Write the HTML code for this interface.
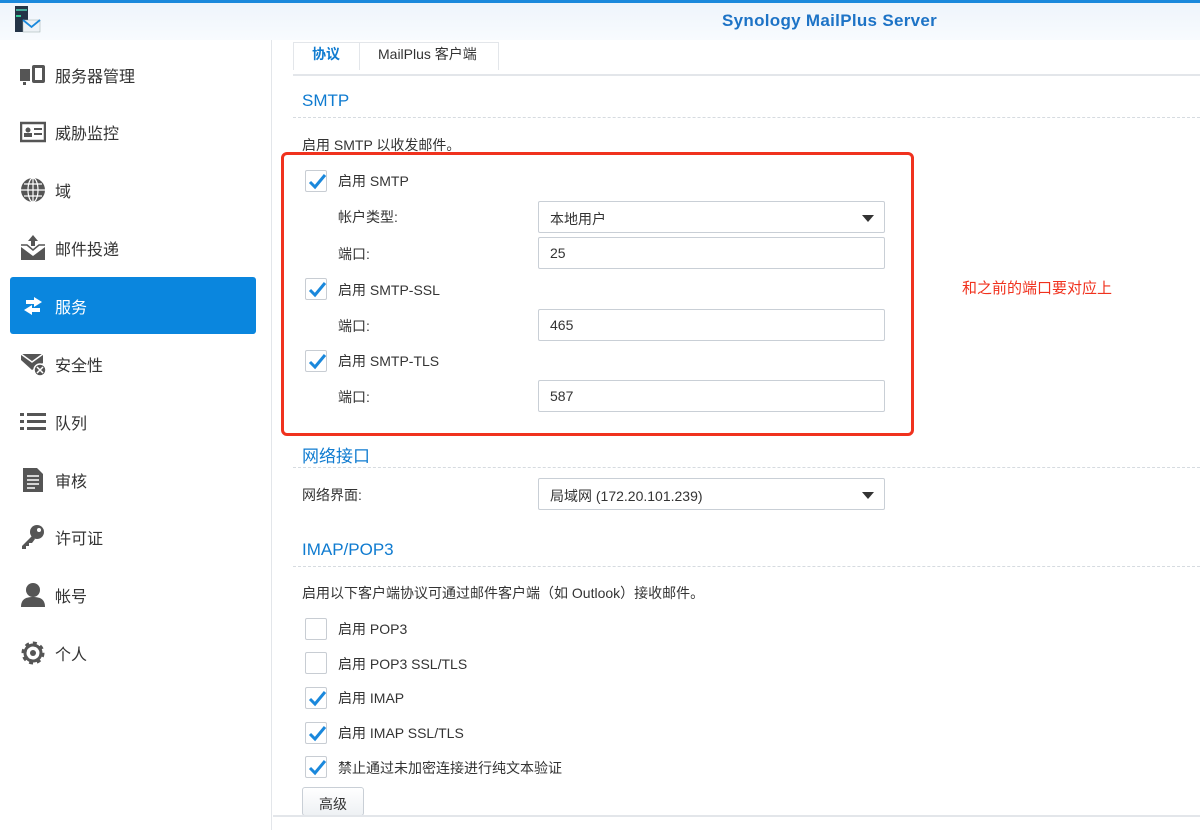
<!DOCTYPE html>
<html><head><meta charset="utf-8"><style>
*{box-sizing:border-box;margin:0;padding:0}
body{width:1200px;height:830px;overflow:hidden;background:#fff;font-family:"Liberation Sans","Noto Sans CJK SC",sans-serif;color:#333;position:relative;font-size:14px}
.a{position:absolute}
#top{left:0;top:0;width:1200px;height:3px;background:#1a88dc}
#hdr{left:0;top:3px;width:1200px;height:37px;background:linear-gradient(#eef4fb,#f8fbfe)}
#title{left:722px;top:11px;font-size:17px;font-weight:bold;color:#1d73c6;letter-spacing:.3px}
#side{left:0;top:40px;width:272px;height:790px;border-right:1px solid #e3e6ea;background:#fff}
.mi{position:absolute;left:10px;width:246px;height:57px;font-size:16px;color:#333}
.mi span{position:absolute;left:45px;top:50%;transform:translateY(-50%)}
.mi svg{position:absolute;left:10px;top:50%;transform:translateY(-50%)}
.sel{background:#0a86de;color:#fff;border-radius:3px}
.h{font-size:17px;color:#0f7bd0}
.line{height:1px;border-top:1px dashed #d6dbe0}
.t{font-size:14px;color:#333}
.cb{position:absolute;left:305px;width:22px;height:22px;border:1px solid #c8cdd3;background:#fff;border-radius:2px}
.cb svg{position:absolute;left:1px;top:1px}
.inp{position:absolute;left:538px;width:347px;height:32px;border:1px solid #c9cfd6;background:#fff;font-size:14px;padding:7px 11px;border-radius:2px}
.arr{position:absolute;right:10px;top:13px;width:0;height:0;border-left:6px solid transparent;border-right:6px solid transparent;border-top:7px solid #333}
</style></head><body>
<div class="a" id="hdr"></div><div class="a" id="top"></div>
<svg class="a" style="left:14px;top:6px" width="28" height="30"><rect x="1" y="0" width="13" height="26" fill="#243447"/><rect x="2" y="3" width="11" height="2" fill="#4a9"/><rect x="2" y="9" width="5" height="2" fill="#3c9"/><rect x="9" y="14" width="17" height="12" fill="#eef2f6" stroke="#9aa" stroke-width=".5"/><path d="M9 14l8.5 7 8.5-7" stroke="#1a88dc" stroke-width="1.8" fill="none"/></svg>
<div class="a" id="title">Synology MailPlus Server</div>
<div class="a" id="side"></div>
<div class="mi" style="top:46px"><svg width="26" height="22"><rect x="0" y="5" width="10" height="12" fill="#555"/><rect x="12" y="1" width="13" height="18" rx="2" fill="#555"/><rect x="15" y="4" width="7" height="12" fill="#fff"/><rect x="3" y="18" width="3" height="3" fill="#555"/></svg><span>服务器管理</span></div>
<div class="mi" style="top:103px"><svg width="26" height="22"><rect x="1" y="2" width="24" height="18" fill="none" stroke="#555" stroke-width="2.5"/><circle cx="8" cy="9" r="2.5" fill="#555"/><rect x="4" y="12" width="8" height="4" fill="#555"/><rect x="14" y="7" width="8" height="2" fill="#555"/><rect x="14" y="12" width="8" height="2" fill="#555"/></svg><span>威胁监控</span></div>
<div class="mi" style="top:161px"><svg width="26" height="26"><circle cx="13" cy="13" r="12" fill="#555"/><path d="M1 13h24M13 1v24M4 7h18M4 19h18" stroke="#fff" stroke-width="1.2"/><ellipse cx="13" cy="13" rx="5" ry="12" fill="none" stroke="#fff" stroke-width="1.2"/></svg><span>域</span></div>
<div class="mi" style="top:219px"><svg width="26" height="26"><path d="M13 0l5 6h-3v5h-4V6H8z" fill="#555"/><path d="M1 12l12 9 12-9v13H1z" fill="#555"/><path d="M1 10h6l6 5 6-5h6" stroke="#555" fill="none" stroke-width="1.5"/></svg><span>邮件投递</span></div>
<div class="mi sel" style="top:277px"><svg width="26" height="22"><path d="M14 2l8 5-8 5V9H6V5h8z" fill="#fff"/><path d="M12 10l-8 5 8 5v-3h8v-4h-8z" fill="#fff"/></svg><span>服务</span></div>
<div class="mi" style="top:335px"><svg width="28" height="26"><path d="M1 3h22v9l-11 7L1 9z" fill="#555"/><path d="M1 3l11 8 11-8" stroke="#fff" fill="none" stroke-width="1.5"/><circle cx="20" cy="19" r="6" fill="#555" stroke="#fff" stroke-width="1.5"/><path d="M17 16l6 6M23 16l-6 6" stroke="#fff" stroke-width="1.5"/></svg><span>安全性</span></div>
<div class="mi" style="top:393px"><svg width="26" height="22"><g fill="#555"><rect x="0" y="2" width="4" height="3"/><rect x="7" y="2" width="19" height="3"/><rect x="0" y="9" width="4" height="3"/><rect x="7" y="9" width="19" height="3"/><rect x="0" y="16" width="4" height="3"/><rect x="7" y="16" width="19" height="3"/></g></svg><span>队列</span></div>
<div class="mi" style="top:451px"><svg width="26" height="26"><path d="M3 1h14l6 6v18H3z" fill="#555"/><path d="M7 9h12M7 13h12M7 17h12M7 21h8" stroke="#fff" stroke-width="1.5"/></svg><span>审核</span></div>
<div class="mi" style="top:508px"><svg width="26" height="26"><circle cx="17" cy="8" r="7" fill="#555"/><circle cx="19" cy="6" r="2" fill="#fff"/><path d="M12 12L2 22v3h4v-3h3v-3h3l3-4z" fill="#555"/></svg><span>许可证</span></div>
<div class="mi" style="top:566px"><svg width="26" height="26"><circle cx="13" cy="8" r="7" fill="#555"/><path d="M1 25c0-8 5-10 12-10s12 2 12 10z" fill="#555"/></svg><span>帐号</span></div>
<div class="mi" style="top:624px"><svg width="26" height="26"><circle cx="13" cy="13" r="9" fill="none" stroke="#555" stroke-width="5" stroke-dasharray="3.5 3.5"/><circle cx="13" cy="13" r="8" fill="none" stroke="#555" stroke-width="3"/><circle cx="13" cy="13" r="3" fill="#555"/></svg><span>个人</span></div>

<div class="a" style="left:293px;top:42px;width:206px;height:28px;border:1px solid #e3e6ea;border-bottom:none"></div>
<div class="a" style="left:359px;top:42px;width:1px;height:28px;background:#e3e6ea"></div>
<div class="a" style="left:293px;top:74px;width:907px;height:2px;background:#e3e6ea"></div>
<div class="a t" style="left:312px;top:44px;color:#0f7bd0;font-weight:bold">协议</div>
<div class="a t" style="left:378px;top:44px">MailPlus 客户端</div>

<div class="a h" style="left:302px;top:91px">SMTP</div>
<div class="a line" style="left:293px;top:117px;width:907px"></div>
<div class="a t" style="left:302px;top:135px">启用 SMTP 以收发邮件。</div>

<div class="cb" style="top:170px"><svg width="20" height="20"><path d="M3 10l5 5 10-12" stroke="#1a88dc" stroke-width="3" fill="none"/></svg></div>
<div class="a t" style="left:338px;top:171px">启用 SMTP</div>
<div class="a t" style="left:338px;top:207px">帐户类型:</div>
<div class="inp" style="top:201px">本地用户<div class="arr"></div></div>
<div class="a t" style="left:338px;top:244px">端口:</div>
<div class="inp" style="top:237px">25</div>
<div class="cb" style="top:278px"><svg width="20" height="20"><path d="M3 10l5 5 10-12" stroke="#1a88dc" stroke-width="3" fill="none"/></svg></div>
<div class="a t" style="left:338px;top:280px">启用 SMTP-SSL</div>
<div class="a t" style="left:338px;top:316px">端口:</div>
<div class="inp" style="top:309px">465</div>
<div class="cb" style="top:350px"><svg width="20" height="20"><path d="M3 10l5 5 10-12" stroke="#1a88dc" stroke-width="3" fill="none"/></svg></div>
<div class="a t" style="left:338px;top:351px">启用 SMTP-TLS</div>
<div class="a t" style="left:338px;top:387px">端口:</div>
<div class="inp" style="top:380px">587</div>
<div class="a" style="left:281px;top:152px;width:633px;height:284px;border:3px solid #f0321e;border-radius:6px"></div>
<div class="a" style="left:962px;top:277px;font-size:15px;color:#f0321e">和之前的端口要对应上</div>

<div class="a h" style="left:302px;top:442px">网络接口</div>
<div class="a line" style="left:293px;top:467px;width:907px"></div>
<div class="a t" style="left:302px;top:485px">网络界面:</div>
<div class="inp" style="top:478px">局域网 (172.20.101.239)<div class="arr"></div></div>

<div class="a h" style="left:302px;top:540px">IMAP/POP3</div>
<div class="a line" style="left:293px;top:566px;width:907px"></div>
<div class="a t" style="left:302px;top:583px">启用以下客户端协议可通过邮件客户端（如 Outlook）接收邮件。</div>
<div class="cb" style="top:618px"></div><div class="a t" style="left:338px;top:619px">启用 POP3</div>
<div class="cb" style="top:652px"></div><div class="a t" style="left:338px;top:654px">启用 POP3 SSL/TLS</div>
<div class="cb" style="top:687px"><svg width="20" height="20"><path d="M3 10l5 5 10-12" stroke="#1a88dc" stroke-width="3" fill="none"/></svg></div><div class="a t" style="left:338px;top:688px">启用 IMAP</div>
<div class="cb" style="top:722px"><svg width="20" height="20"><path d="M3 10l5 5 10-12" stroke="#1a88dc" stroke-width="3" fill="none"/></svg></div><div class="a t" style="left:338px;top:723px">启用 IMAP SSL/TLS</div>
<div class="cb" style="top:756px"><svg width="20" height="20"><path d="M3 10l5 5 10-12" stroke="#1a88dc" stroke-width="3" fill="none"/></svg></div><div class="a t" style="left:338px;top:758px">禁止通过未加密连接进行纯文本验证</div>
<div class="a t" style="left:302px;top:787px;width:62px;height:29px;border:1px solid #c9cfd6;background:linear-gradient(#fff,#eef1f4);border-radius:3px;text-align:center;padding-top:6px">高级</div>
<div class="a" style="left:273px;top:815px;width:927px;height:2px;background:#e3e6ea"></div>
</body></html>
